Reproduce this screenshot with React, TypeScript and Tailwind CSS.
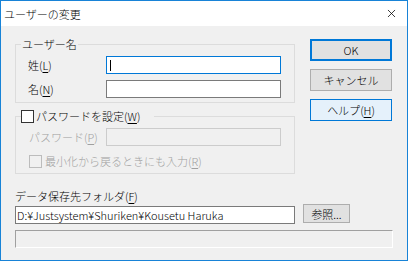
import { X } from "lucide-react";

const font = { fontFamily: '"Noto Sans CJK JP", "Liberation Sans", sans-serif' };

const Mn = ({ k }: { k: string }) => (
  <>
    (<span className="underline underline-offset-2">{k}</span>)
  </>
);

const Box = ({ disabled = false }: { disabled?: boolean }) => (
  <span
    className={
      "inline-block h-[13px] w-[13px] shrink-0 border " +
      (disabled ? "border-[#bcbcbc] bg-[#f0f0f0]" : "border-[#333333] bg-white")
    }
  />
);

const App = () => {
  return (
    <div
      className="flex h-[261px] w-[408px] flex-col overflow-hidden border border-[#1883d7] bg-[#f0f0f0] text-[11px] font-light leading-4 text-black"
      style={font}
    >
      {/* TITLE BAR */}
      <div className="flex h-[25px] shrink-0 items-center justify-between bg-white pl-[3px] pr-[9px]">
        <span>ユーザーの変更</span>
        <X className="h-[13px] w-[13px]" strokeWidth={1.4} />
      </div>

      <div className="flex flex-col px-[14px]">
        <div className="flex">
          {/* LEFT COLUMN */}
          <div className="flex w-[280px] flex-col">
            <fieldset className="mt-[10px] border border-[#dcdcdc] px-[5px] pb-[4px]">
              <legend className="px-[1px]">ユーザー名</legend>
              <div className="mt-[4px] flex flex-col gap-[6px] pl-[7px]">
                <div className="flex items-center">
                  <span className="w-[78px]">
                    姓<Mn k="L" />
                  </span>
                  <div className="flex h-[18px] w-[175px] items-center border border-[#0078d7] bg-white pl-[3px]">
                    <span className="h-[11px] w-[1px] bg-black" />
                  </div>
                </div>
                <div className="flex items-center">
                  <span className="w-[78px]">
                    名<Mn k="N" />
                  </span>
                  <div className="h-[18px] w-[175px] border border-[#7a7a7a] bg-white" />
                </div>
              </div>
            </fieldset>

            <fieldset className="mt-[5px] border border-[#dcdcdc] px-[5px] pb-[4px]">
              <legend className="flex items-center gap-[2px] pr-[14px]">
                <Box />
                <span>
                  パスワードを設定<Mn k="W" />
                </span>
              </legend>
              <div className="mt-[4px] flex flex-col pl-[8px] text-[#a0a0a0]">
                <div className="flex items-center">
                  <span className="w-[77px]">
                    パスワード<Mn k="P" />
                  </span>
                  <div className="h-[18px] w-[175px] border border-[#cccccc] bg-[#f0f0f0]" />
                </div>
                <div className="mt-[7px] flex items-center gap-[3px]">
                  <Box disabled />
                  <span>
                    最小化から戻るときにも入力<Mn k="R" />
                  </span>
                </div>
              </div>
            </fieldset>
          </div>

          {/* BUTTONS */}
          <div className="ml-[15px] mt-[13px] flex flex-col gap-[8px]">
            <button className="h-[22px] w-[82px] border-2 border-[#0078d7] bg-[#e1e1e1]">OK</button>
            <button className="h-[22px] w-[82px] border border-[#adadad] bg-[#e1e1e1]">キャンセル</button>
            <button className="h-[22px] w-[82px] border border-[#0078d7] bg-[#e5f1fb]">
              ヘルプ<Mn k="H" />
            </button>
          </div>
        </div>

        {/* DATA FOLDER */}
        <span className="mt-[14px]">
          データ保存先フォルダ<Mn k="F" />
        </span>
        <div className="flex items-start">
          <div className="mt-[2px] flex h-[18px] w-[280px] items-center border border-[#7a7a7a] bg-white pl-[1px]">
            D:¥Justsystem¥Shuriken¥Kousetu Haruka
          </div>
          <button className="ml-[8px] h-[19px] w-[47px] border border-[#adadad] bg-[#e1e1e1]">参照...</button>
        </div>
        <div className="mt-[6px] h-[18px] w-[378px] border border-b-white border-l-[#a0a0a0] border-r-white border-t-[#a0a0a0] bg-[#f0f0f0]" />
      </div>
    </div>
  );
};

export default App;
